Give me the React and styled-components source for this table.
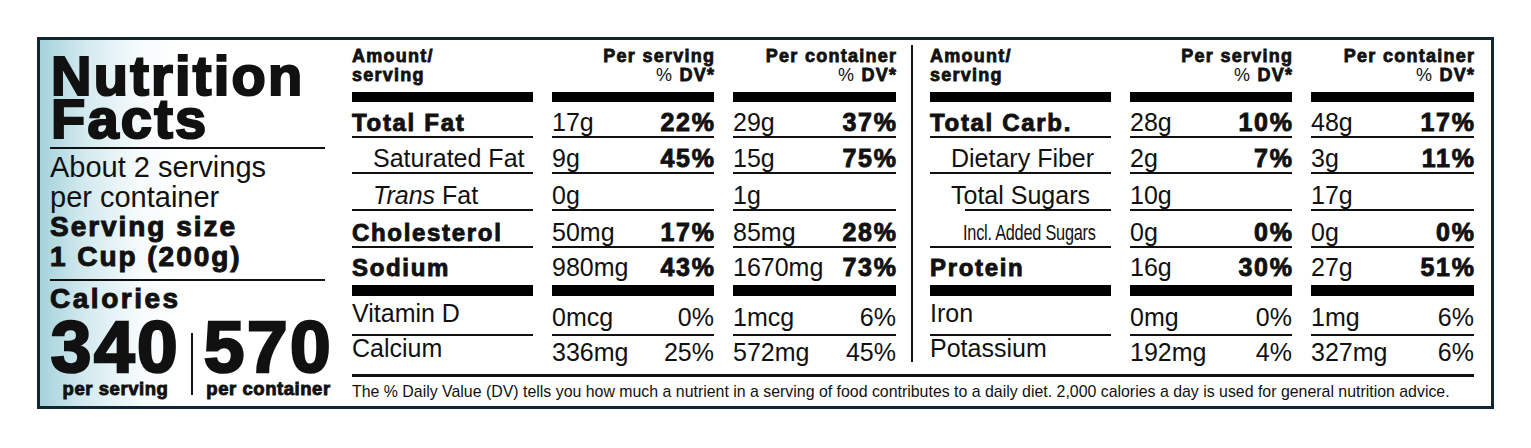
import React from 'react';
import styled, { createGlobalStyle, css } from 'styled-components';

const Global = createGlobalStyle`
  html, body { margin: 0; padding: 0; background: #fff; }
  body { font-family: "Liberation Sans", Arial, sans-serif; color: #111; }
  #root { padding: 37px; }
`;

const heavy = css`
  font-weight: 700;
  letter-spacing: 0.07em;
  -webkit-text-stroke: 0.9px currentColor;
`;

const Label = styled.div`
  display: flex;
  box-sizing: border-box;
  width: 1457px;
  height: 372px;
  border: 3px solid #0f2730;
`;

const Side = styled.div`
  flex-shrink: 0;
  box-sizing: border-box;
  width: 312px;
  padding-left: 10px;
  background: linear-gradient(90deg, #a5d2db 0px, #d3eaef 45px, #f6fbfc 100px, #fff 140px);
`;

const Title = styled.h1`
  margin: 14px 0 0;
  font-size: 56px;
  line-height: 43px;
  font-weight: 700;
  letter-spacing: 0.04em;
  -webkit-text-stroke: 2.2px currentColor;
  padding-left: 1px;
`;

const Rule = styled.div`
  width: 275px;
  height: 2px;
  background: #111;
  margin-top: ${p => p.$top}px;
`;

const Servings = styled.div`
  margin-top: 4px;
  font-size: 29px;
  line-height: 29.5px;
`;

const Strong = styled.div`
  font-size: 28px;
  ${heavy}
  -webkit-text-stroke: 1px currentColor;
`;

const Calories = styled.div`
  margin-top: 3px;
  font-size: 28px;
  line-height: 30px;
  ${heavy}
  letter-spacing: 0.09em;
  -webkit-text-stroke: 1px currentColor;
`;

const CalRow = styled.div`
  display: flex;
  margin-top: 5px;
`;

const CalCol = styled.div`
  width: 131px;
  display: flex;
  flex-direction: column;
  align-items: center;
  white-space: nowrap;
`;

const BigNum = styled.div`
  font-size: 73px;
  line-height: 56px;
  font-weight: 700;
  letter-spacing: 0.035em;
  -webkit-text-stroke: 2.6px currentColor;
`;

const Per = styled.div`
  margin-top: 3px;
  font-size: 18.5px;
  line-height: 22px;
  ${heavy}
  letter-spacing: 0.03em;
`;

const CalDivider = styled.div`
  width: 2px;
  background: #111;
  margin: 14px 10px 5px 10px;
`;

const Main = styled.div`
  flex: 1;
  min-width: 0;
  display: flex;
  flex-direction: column;
  padding: 7px 17px 0 0;
`;

const Tables = styled.div`
  display: flex;
`;

const Divider = styled.div`
  width: 2px;
  background: #111;
  margin: -2px 17px 12px 15px;
`;

const Half = styled.div`
  width: 544px;
`;

const Row = styled.div`
  display: grid;
  grid-template-columns: 181px 162px 163px;
  column-gap: 19px;
  height: ${p => p.$h}px;
`;

const Bar = styled.div`
  height: ${p => p.$h}px;
  background: #000;
`;

const Head = styled.div`
  font-size: 18px;
  line-height: 19px;
  ${heavy}
  -webkit-text-stroke: 0.8px currentColor;
  text-align: ${p => (p.$right ? 'right' : 'left')};
  margin-right: ${p => (p.$right ? '-0.07em' : 0)};
  span { font-weight: 400; -webkit-text-stroke: 0; }
`;

const Cell = styled.div`
  position: relative;
  display: flex;
  align-items: flex-end;
  justify-content: space-between;
  white-space: nowrap;
  padding-bottom: ${p => p.$pb}px;
  padding-left: ${p => p.$indent || 0}px;
  font-size: 25px;
  line-height: 25px;
  ${p => p.$line && css`
    &::after {
      content: '';
      position: absolute;
      left: ${p.$lineIndent || 0}px;
      right: 0;
      bottom: 0;
      height: 2px;
      background: #111;
    }
  `}
`;

const Name = styled.span`
  font-size: ${p => (p.$bold ? 24 : 25)}px;
  ${p => p.$bold && heavy}
`;

const Narrow = styled.span`
  display: inline-block;
  font-size: 22px;
  letter-spacing: -0.3px;
  transform: scaleX(0.74);
  transform-origin: left bottom;
`;

const Pct = styled.span`
  ${p => p.$bold && heavy}
  ${p => p.$bold && 'margin-right: -0.07em;'}
`;

const FullRule = styled.div`
  height: 3px;
  background: #111;
`;

const Foot = styled.p`
  margin: 5px 0 0;
  font-size: 15.9px;
  line-height: 20px;
  white-space: nowrap;
`;

const leftRows = [
  { name: 'Total Fat', bold: true, s: ['17g', '22%'], c: ['29g', '37%'] },
  { name: 'Saturated Fat', indent: 21, s: ['9g', '45%'], c: ['15g', '75%'] },
  { name: <><i>Trans</i> Fat</>, indent: 21, s: ['0g', ''], c: ['1g', ''] },
  { name: 'Cholesterol', bold: true, s: ['50mg', '17%'], c: ['85mg', '28%'] },
  { name: 'Sodium', bold: true, s: ['980mg', '43%'], c: ['1670mg', '73%'] },
];

const rightRows = [
  { name: 'Total Carb.', bold: true, s: ['28g', '10%'], c: ['48g', '17%'] },
  { name: 'Dietary Fiber', indent: 21, s: ['2g', '7%'], c: ['3g', '11%'] },
  { name: 'Total Sugars', indent: 21, lineIndent: 35, s: ['10g', ''], c: ['17g', ''] },
  { name: <Narrow>Incl. Added Sugars</Narrow>, indent: 33, s: ['0g', '0%'], c: ['0g', '0%'] },
  { name: 'Protein', bold: true, s: ['16g', '30%'], c: ['27g', '51%'] },
];

const leftVits = [
  { name: 'Vitamin D', s: ['0mcg', '0%'], c: ['1mcg', '6%'] },
  { name: 'Calcium', s: ['336mg', '25%'], c: ['572mg', '45%'] },
];

const rightVits = [
  { name: 'Iron', s: ['0mg', '0%'], c: ['1mg', '6%'] },
  { name: 'Potassium', s: ['192mg', '4%'], c: ['327mg', '6%'] },
];

const mainHeights = [36, 36, 37, 37, 37];
const vitHeights = [40, 38];
// names in the vitamin rows sit a few pixels above their values
const vitNamePb = [10, 14];
const vitValPb = [6, 10];

function Values({ v, bold, pb, line }) {
  return (
    <Cell $pb={pb} $line={line}>
      <span>{v[0]}</span>
      <Pct $bold={bold}>{v[1]}</Pct>
    </Cell>
  );
}

function Table({ rows, vits }) {
  return (
    <Half>
      <Row $h={45}>
        <Head>Amount/<br />serving</Head>
        <Head $right>Per serving<br /><span>%</span> DV*</Head>
        <Head $right>Per container<br /><span>%</span> DV*</Head>
      </Row>
      <Row $h={10}><Bar $h={10} /><Bar $h={10} /><Bar $h={10} /></Row>
      {rows.map((r, i) => {
        const last = i === rows.length - 1;
        const pb = last ? 5 : 3;
        return (
          <Row key={i} $h={mainHeights[i]}>
            <Cell $pb={pb} $line={!last} $indent={r.indent} $lineIndent={r.lineIndent}>
              <Name $bold={r.bold}>{r.name}</Name>
            </Cell>
            <Values v={r.s} bold pb={pb} line={!last} />
            <Values v={r.c} bold pb={pb} line={!last} />
          </Row>
        );
      })}
      <Row $h={11}><Bar $h={11} /><Bar $h={11} /><Bar $h={11} /></Row>
      {vits.map((r, i) => {
        const line = i === 0;
        return (
          <Row key={i} $h={vitHeights[i]}>
            <Cell $pb={vitNamePb[i]} $line={line}><Name>{r.name}</Name></Cell>
            <Values v={r.s} pb={vitValPb[i]} line={line} />
            <Values v={r.c} pb={vitValPb[i]} line={line} />
          </Row>
        );
      })}
    </Half>
  );
}

export default function App() {
  return (
    <>
      <Global />
      <Label>
        <Side>
          <Title>Nutrition<br />Facts</Title>
          <Rule $top={7} />
          <Servings>
            <div>About 2 servings</div>
            <div>per container</div>
            <Strong>Serving size</Strong>
            <Strong>1 Cup (200g)</Strong>
          </Servings>
          <Rule $top={8} />
          <Calories>Calories</Calories>
          <CalRow>
            <CalCol>
              <BigNum>340</BigNum>
              <Per>per serving</Per>
            </CalCol>
            <CalDivider />
            <CalCol>
              <BigNum>570</BigNum>
              <Per>per container</Per>
            </CalCol>
          </CalRow>
        </Side>
        <Main>
          <Tables>
            <Table rows={leftRows} vits={leftVits} />
            <Divider />
            <Table rows={rightRows} vits={rightVits} />
          </Tables>
          <FullRule />
          <Foot>The % Daily Value (DV) tells you how much a nutrient in a serving of food contributes to a daily diet. 2,000 calories a day is used for general nutrition advice.</Foot>
        </Main>
      </Label>
    </>
  );
}
